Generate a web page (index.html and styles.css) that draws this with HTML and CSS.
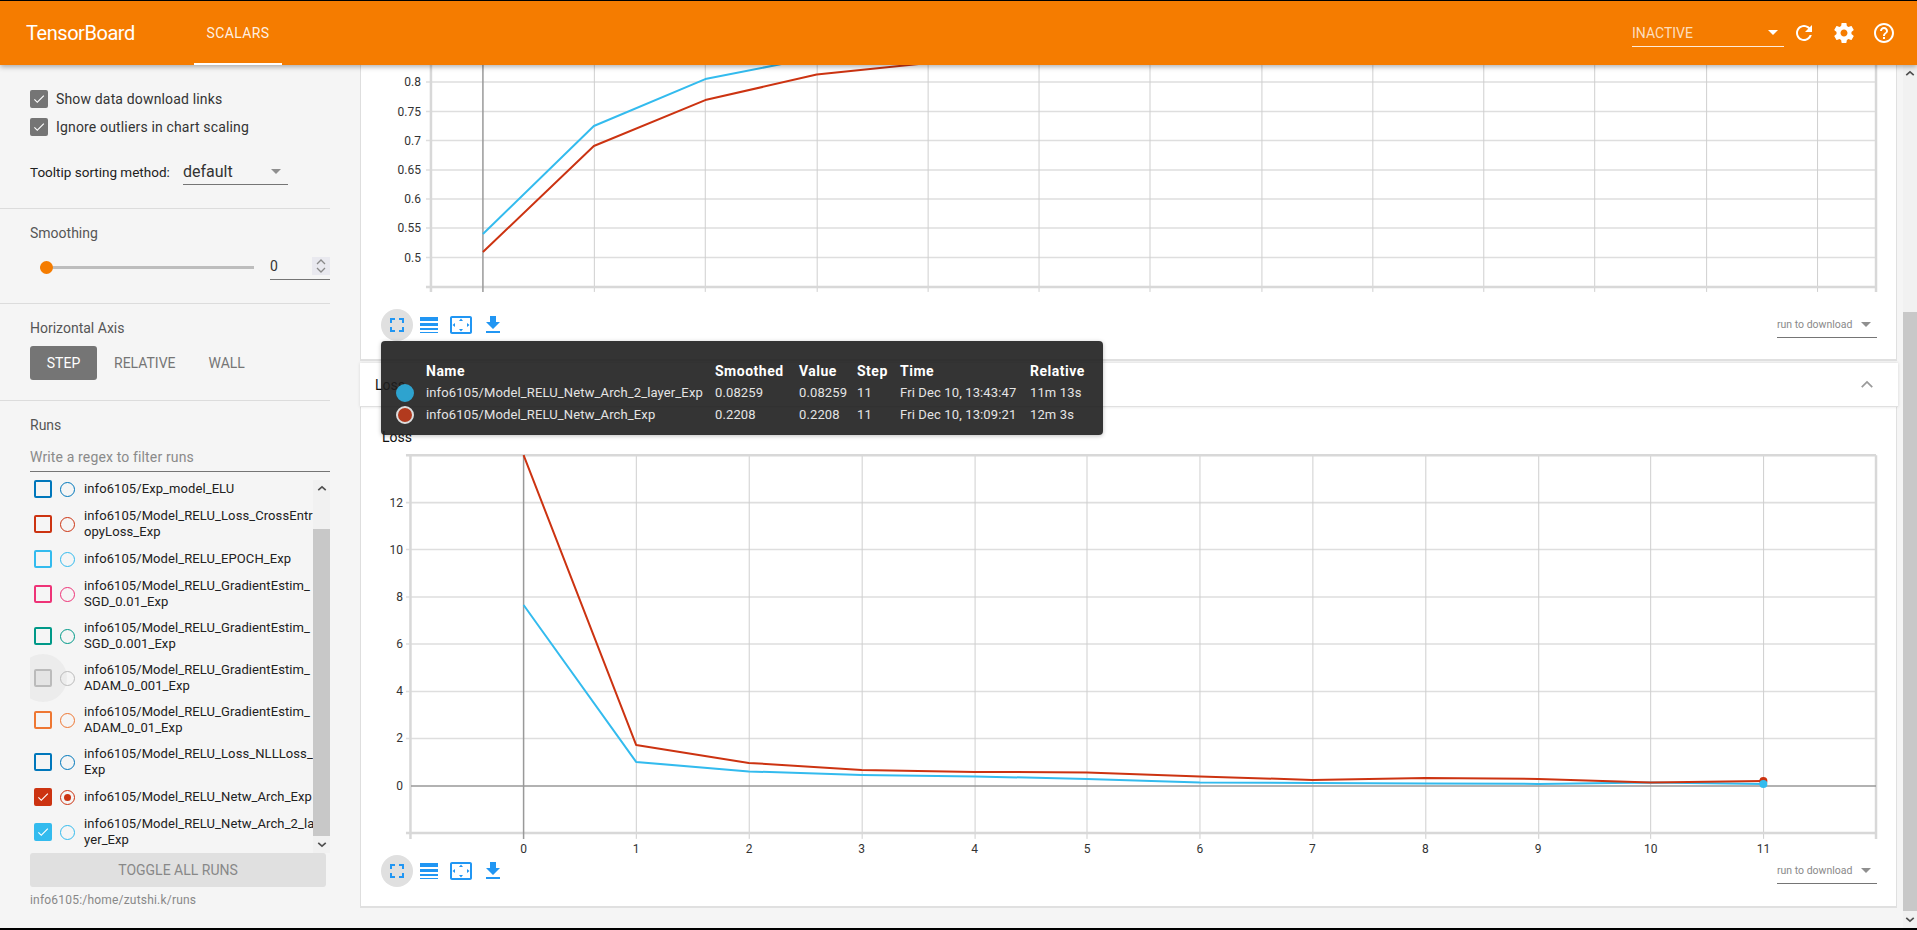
FILE: index.html
```html
<!DOCTYPE html>
<html lang="en">
<head>
<meta charset="utf-8">
<title>TensorBoard</title>
<link rel="stylesheet" href="styles.css">
</head>
<body>
<svg class="defs" width="0" height="0" aria-hidden="true">
  <defs>
    <symbol id="i-check" viewBox="0 0 24 24"><path d="M9 16.17 4.83 12l-1.42 1.41L9 19 21 7l-1.41-1.41z"/></symbol>
    <symbol id="i-full" viewBox="0 0 24 24"><path d="M7 14H5v5h5v-2H7v-3zm-2-4h2V7h3V5H5v5zm12 7h-3v2h5v-5h-2v3zM14 5v2h3v3h2V5h-5z"/></symbol>
    <symbol id="i-lines" viewBox="0 0 24 24"><path d="M3 17h18v-2H3v2zm0 3h18v-1H3v1zm0-7h18v-3H3v3zm0-9v4h18V4H3z"/></symbol>
    <symbol id="i-fit" viewBox="0 0 24 24"><path d="M12.01 5.5L10 8h4l-1.99-2.5zM18 10v4l2.5-1.99L18 10zM6 10l-2.5 2.01L6 14v-4zm8 6h-4l2.01 2.5L14 16zm7-13H3c-1.1 0-2 .9-2 2v14c0 1.1.9 2 2 2h18c1.1 0 2-.9 2-2V5c0-1.1-.9-2-2-2zm0 16.01H3V4.99h18v14.02z"/></symbol>
    <symbol id="i-down" viewBox="0 0 24 24"><path d="M19 9h-4V3H9v6H5l7 7 7-7zM5 18v2h14v-2H5z"/></symbol>
  </defs>
</svg>
<div class="app">
  <header class="topbar">
    <div class="brand">TensorBoard</div>
    <div class="tab">SCALARS</div>
    <div class="topright">
      <div class="inactive"><span>INACTIVE</span><i class="caret caret-white"></i></div>
      <button class="topicon"><svg viewBox="0 0 24 24"><path d="M17.65 6.35C16.2 4.9 14.21 4 12 4c-4.42 0-7.99 3.58-7.99 8s3.57 8 7.99 8c3.73 0 6.84-2.55 7.73-6h-2.08c-.82 2.33-3.04 4-5.65 4-3.31 0-6-2.69-6-6s2.69-6 6-6c1.66 0 3.14.69 4.22 1.78L13 11h7V4l-2.35 2.35z"/></svg></button>
      <button class="topicon"><svg viewBox="0 0 24 24"><path d="M19.43 12.98c.04-.32.07-.64.07-.98s-.03-.66-.07-.98l2.11-1.65c.19-.15.24-.42.12-.64l-2-3.46c-.12-.22-.39-.3-.61-.22l-2.49 1c-.52-.4-1.08-.73-1.69-.98l-.38-2.65C14.46 2.18 14.25 2 14 2h-4c-.25 0-.46.18-.49.42l-.38 2.65c-.61.25-1.17.59-1.69.98l-2.49-1c-.23-.09-.49 0-.61.22l-2 3.46c-.13.22-.07.49.12.64l2.11 1.65c-.04.32-.07.65-.07.98s.03.66.07.98l-2.11 1.65c-.19.15-.24.42-.12.64l2 3.46c.12.22.39.3.61.22l2.49-1c.52.4 1.08.73 1.69.98l.38 2.65c.03.24.24.42.49.42h4c.25 0 .46-.18.49-.42l.38-2.65c.61-.25 1.17-.59 1.69-.98l2.49 1c.23.09.49 0 .61-.22l2-3.46c.12-.22.07-.49-.12-.64l-2.11-1.65zM12 15.5c-1.93 0-3.5-1.57-3.5-3.5s1.57-3.5 3.5-3.5 3.5 1.57 3.5 3.5-1.57 3.5-3.5 3.5z"/></svg></button>
      <button class="topicon"><svg viewBox="0 0 24 24"><path d="M11 18h2v-2h-2v2zm1-16C6.48 2 2 6.48 2 12s4.48 10 10 10 10-4.48 10-10S17.52 2 12 2zm0 18c-4.41 0-8-3.59-8-8s3.59-8 8-8 8 3.59 8 8-3.59 8-8 8zm0-14c-2.21 0-4 1.79-4 4h2c0-1.1.9-2 2-2s2 .9 2 2c0 2-3 1.75-3 5h2c0-2.25 3-2.5 3-5 0-2.21-1.79-4-4-4z"/></svg></button>
    </div>
  </header>

  <div class="body-row">
    <aside class="sidebar">
      <section class="sec sec-options">
        <label class="opt"><span class="cb cb-grey"><svg><use href="#i-check"/></svg></span>Show data download links</label>
        <label class="opt"><span class="cb cb-grey"><svg><use href="#i-check"/></svg></span>Ignore outliers in chart scaling</label>
        <div class="sort-row">
          <span class="sort-label">Tooltip sorting method:</span>
          <div class="sort-select"><span>default</span><i class="caret caret-grey"></i></div>
        </div>
      </section>
      <section class="sec sec-smooth">
        <div class="sec-title">Smoothing</div>
        <div class="slider-row">
          <div class="slider"><i class="knob"></i></div>
          <div class="num"><span>0</span>
            <div class="spin"><svg viewBox="0 0 10 18"><path d="M1 7l4-4 4 4M1 11l4 4 4-4"/></svg></div>
          </div>
        </div>
      </section>
      <section class="sec sec-axis">
        <div class="sec-title">Horizontal Axis</div>
        <div class="axis-btns">
          <div class="ab ab-on">STEP</div>
          <div class="ab ab-rel">RELATIVE</div>
          <div class="ab ab-wall">WALL</div>
        </div>
      </section>
      <section class="sec sec-runs">
        <div class="sec-title">Runs</div>
        <div class="regex">Write a regex to filter runs</div>
        <div class="runs">
          <div class="run c-blue"><span class="cb"></span><span class="rd"></span><span class="rn">info6105/Exp_model_ELU</span></div>
          <div class="run c-red"><span class="cb"></span><span class="rd"></span><span class="rn">info6105/Model_RELU_Loss_CrossEntropyLoss_Exp</span></div>
          <div class="run c-cyan"><span class="cb"></span><span class="rd"></span><span class="rn">info6105/Model_RELU_EPOCH_Exp</span></div>
          <div class="run c-pink"><span class="cb"></span><span class="rd"></span><span class="rn">info6105/Model_RELU_GradientEstim_SGD_0.01_Exp</span></div>
          <div class="run c-teal"><span class="cb"></span><span class="rd"></span><span class="rn">info6105/Model_RELU_GradientEstim_SGD_0.001_Exp</span></div>
          <div class="run c-grey"><i class="ripple"></i><span class="cb"></span><span class="rd"></span><span class="rn">info6105/Model_RELU_GradientEstim_ADAM_0_001_Exp</span></div>
          <div class="run c-orange"><span class="cb"></span><span class="rd"></span><span class="rn">info6105/Model_RELU_GradientEstim_ADAM_0_01_Exp</span></div>
          <div class="run c-blue"><span class="cb"></span><span class="rd"></span><span class="rn">info6105/Model_RELU_Loss_NLLLoss_Exp</span></div>
          <div class="run c-red on"><span class="cb"><svg><use href="#i-check"/></svg></span><span class="rd sel"></span><span class="rn">info6105/Model_RELU_Netw_Arch_Exp</span></div>
          <div class="run c-cyan on"><span class="cb"><svg><use href="#i-check"/></svg></span><span class="rd"></span><span class="rn">info6105/Model_RELU_Netw_Arch_2_layer_Exp</span></div>
          <div class="mini-scroll">
            <div class="sb-arrow"><svg viewBox="0 0 12 8"><path d="M1.5 6L6 2l4.500 4"/></svg></div>
            <div class="sb-track"></div>
            <div class="sb-thumb"></div>
            <div class="sb-arrow"><svg viewBox="0 0 12 8"><path d="M1.500 2L6 6l4.500-4"/></svg></div>
          </div>
        </div>
        <div class="toggle">TOGGLE ALL RUNS</div>
        <div class="logdir">info6105:/home/zutshi.k/runs</div>
      </section>
    </aside>

    <main class="main">
      <article class="card card-top">
        <svg class="chart chart-a" viewBox="361 65 1536 244">
          <path class="gh" d="M426 82H1877M426 111.500H1877M426 140.500H1877M426 170H1877M426 199H1877M426 228H1877M426 257.500H1877"/>
          <path class="gv" d="M594.500 65V292M705.500 65V292M817.500 65V292M928.500 65V292M1039.500 65V292M1150.500 65V292M1262.500 65V292M1373.500 65V292M1484.500 65V292M1595.500 65V292M1707.500 65V292M1818.500 65V292"/>
          <path class="axis" d="M431 65V292M426 287H1877M1877 65V292"/>
          <path class="origin" d="M483 65V292"/>
          <polyline class="ln ln-cyan" points="483,234 594,126 705.500,79 817,57 928,40"/>
          <polyline class="ln ln-red" points="483,252 594,146 705.500,100 817,74.500 928,63 1039,50"/>
          <g class="ylab">
            <text x="421" y="86">0.8</text><text x="421" y="115.500">0.75</text><text x="421" y="145">0.7</text>
            <text x="421" y="174">0.65</text><text x="421" y="203">0.6</text><text x="421" y="232">0.55</text><text x="421" y="262">0.5</text>
          </g>
        </svg>
        <div class="tools">
          <button class="tool tool-on"><svg><use href="#i-full"/></svg></button>
          <button class="tool"><svg><use href="#i-lines"/></svg></button>
          <button class="tool"><svg><use href="#i-fit"/></svg></button>
          <button class="tool"><svg><use href="#i-down"/></svg></button>
          <div class="dl"><span>run to download</span><i class="caret caret-grey"></i></div>
        </div>
      </article>

      <div class="loss-head">
        <span>Loss</span>
        <svg viewBox="0 0 16 10"><path d="M2 8l6-6 6 6"/></svg>
      </div>

      <article class="card card-loss">
        <div class="chart-title">Loss</div>
        <svg class="chart chart-b" viewBox="361 445 1536 410">
          <path class="gh" d="M406 502.500H1877M406 549.500H1877M406 597H1877M406 644H1877M406 691.500H1877M406 738.500H1877"/>
          <path class="gv" d="M636.500 455V839M749.500 455V839M862.500 455V839M975.500 455V839M1087.500 455V839M1200.500 455V839M1313.500 455V839M1426.500 455V839M1539.500 455V839M1651.500 455V839M1764.500 455V839"/>
          <path class="axis" d="M410.500 455V839M406 455H1877M406 833H1877M1877 455V839"/>
          <path class="origin" d="M523.700 455V839M411 786H1877"/>
          <polyline class="ln ln-cyan" points="523.700,605 636.300,762 749,771.500 862,775 975,776.500 1087.500,779 1200.500,782.500 1313,783 1426,783.500 1539,784 1651.500,782.500 1764.300,784"/>
          <polyline class="ln ln-red" points="523.700,455 636.300,745 749,763 862,770 975,772 1087.500,772.500 1200.500,776.500 1313,780 1426,778 1539,779 1651.500,782.500 1764.300,781"/>
          <circle class="pt-red" cx="1764.300" cy="781" r="4"/>
          <circle class="pt-cyan" cx="1764.300" cy="784" r="4"/>
          <g class="ylab">
            <text x="403" y="506.500">12</text><text x="403" y="553.500">10</text><text x="403" y="601">8</text><text x="403" y="648">6</text>
            <text x="403" y="695.500">4</text><text x="403" y="742.500">2</text><text x="403" y="790">0</text>
          </g>
          <g class="xlab">
            <text x="523.700" y="853">0</text><text x="636.300" y="853">1</text><text x="749.500" y="853">2</text><text x="862" y="853">3</text>
            <text x="975" y="853">4</text><text x="1087.500" y="853">5</text><text x="1200.500" y="853">6</text><text x="1313" y="853">7</text>
            <text x="1426" y="853">8</text><text x="1539" y="853">9</text><text x="1651.500" y="853">10</text><text x="1764.300" y="853">11</text>
          </g>
        </svg>
        <div class="tools">
          <button class="tool tool-on"><svg><use href="#i-full"/></svg></button>
          <button class="tool"><svg><use href="#i-lines"/></svg></button>
          <button class="tool"><svg><use href="#i-fit"/></svg></button>
          <button class="tool"><svg><use href="#i-down"/></svg></button>
          <div class="dl"><span>run to download</span><i class="caret caret-grey"></i></div>
        </div>
      </article>
    </main>

    <div class="page-scroll">
      <div class="sb-arrow"><svg viewBox="0 0 12 8"><path d="M1.500 6L6 2l4.500 4"/></svg></div>
      <div class="ps-track"></div>
      <div class="ps-thumb"></div>
      <div class="sb-arrow"><svg viewBox="0 0 12 8"><path d="M1.500 2L6 6l4.500-4"/></svg></div>
    </div>
  </div>

  <div class="tooltip">
    <span></span><b>Name</b><b>Smoothed</b><b>Value</b><b>Step</b><b>Time</b><b>Relative</b>
    <i class="dot dot-cyan"></i><span>info6105/Model_RELU_Netw_Arch_2_layer_Exp</span><span>0.08259</span><span>0.08259</span><span>11</span><span>Fri Dec 10, 13:43:47</span><span>11m 13s</span>
    <i class="dot dot-red"></i><span>info6105/Model_RELU_Netw_Arch_Exp</span><span>0.2208</span><span>0.2208</span><span>11</span><span>Fri Dec 10, 13:09:21</span><span>12m 3s</span>
  </div>
</div>
</body>
</html>
```

FILE: styles.css
```css
* { box-sizing: border-box; }
html, body { margin: 0; height: 100%; overflow: hidden; }
body { background: #000; font-family: Roboto, "Liberation Sans", sans-serif; color: #333; }
.defs { position: absolute; }
button { border: 0; background: none; padding: 0; margin: 0; }

.app { position: relative; margin-top: 1px; height: 927px; background: #f5f5f5; display: flex; flex-direction: column; overflow: hidden; }

/* top bar */
.topbar { flex: none; position: relative; z-index: 3; height: 64px; background: #f57c00; color: #fff; display: flex; align-items: center; padding-left: 26px; box-shadow: 0 2px 5px rgba(0,0,0,.3); }
.brand { font-size: 20px; font-weight: 400; width: 107px; white-space: nowrap; letter-spacing: -.45px; }
.tab { margin-left: 61px; width: 88px; height: 64px; line-height: 64px; text-align: center; font-size: 14px; letter-spacing: .4px; border-bottom: 2px solid #fff; color: rgba(255,255,255,.9); }
.topright { margin-left: auto; display: flex; align-items: center; padding-right: 13px; }
.inactive { width: 152px; height: 27px; border-bottom: 1px solid rgba(255,255,255,.85); display: flex; align-items: center; justify-content: space-between; padding-right: 6px; font-size: 14px; color: rgba(255,255,255,.75); }
.topicon { width: 40px; height: 40px; display: flex; align-items: center; justify-content: center; }
.topicon svg { width: 24px; height: 24px; fill: #fff; }
.caret { display: block; width: 0; height: 0; border-left: 5px solid transparent; border-right: 5px solid transparent; }
.caret-white { border-top: 5px solid #fff; }
.caret-grey { border-top: 5px solid #8f8f8f; }

.body-row { flex: 1; min-height: 0; display: flex; }

/* sidebar */
.sidebar { flex: none; width: 330px; margin-right: 30px; font-size: 14px; }
.sec { padding-left: 30px; border-bottom: 1px solid #dcdcdc; }
.sec-runs { border-bottom: 0; }
.sec-options { height: 144px; padding-top: 25px; }
.opt { display: flex; align-items: center; height: 18px; margin-bottom: 10px; gap: 8px; font-size: 14px; letter-spacing: .16px; color: #333; }
.cb { flex: none; width: 18px; height: 18px; border-radius: 2px; border: 2px solid currentColor; display: block; }
.cb svg { display: block; width: 14px; height: 14px; fill: #fff; }
.cb-grey { background: #757575; border-color: #757575; }
.sort-row { display: flex; align-items: flex-start; margin-top: 23px; }
.sort-label { width: 153px; line-height: 26px; font-size: 13.500px; color: #212121; }
.sort-select { width: 105px; height: 26px; border-bottom: 1px solid #757575; display: flex; align-items: center; justify-content: space-between; padding-right: 7px; font-size: 16px; color: #333; }
.sec-title { height: 16px; line-height: 16px; font-size: 14px; color: #555; }
.sec-smooth { height: 95px; padding-top: 16px; }
.slider-row { display: flex; margin-top: 14px; height: 25px; justify-content: space-between; }
.slider { position: relative; margin-left: 10px; width: 214px; height: 3px; margin-top: 11px; background: #bdbdbd; }
.knob { position: absolute; left: 0; top: -5px; width: 13px; height: 13px; border-radius: 50%; background: #f57c00; }
.num { position: relative; width: 60px; height: 25px; border-bottom: 1px solid #757575; font-size: 14px; line-height: 23px; color: #333; }
.spin { position: absolute; right: 0; top: 2px; width: 18px; height: 18px; background: #e9e9ef; display: flex; justify-content: center; }
.spin svg { width: 10px; height: 18px; fill: none; stroke: #8a8a8a; stroke-width: 1.300; }
.sec-axis { height: 97px; padding-top: 16px; }
.axis-btns { display: flex; margin-top: 10px; font-size: 14px; color: #757575; }
.ab { height: 34px; line-height: 34px; }
.ab-on { width: 67px; text-align: center; background: #757575; color: #fff; border-radius: 3px; }
.ab-rel { margin-left: 17px; }
.ab-wall { margin-left: 33px; }
.sec-runs { padding-top: 16px; }
.regex { margin-top: 12px; height: 27px; line-height: 25px; border-bottom: 1px solid #757575; font-size: 14px; letter-spacing: .14px; color: #8a8a8a; }
.runs { position: relative; margin-top: 8px; height: 373px; overflow: hidden; }
.run { position: relative; display: flex; align-items: center; padding: 5px 0 5px 4px; font-size: 13px; line-height: 16px; }
.run:first-child { padding-top: 0; }
.run .cb, .run .rd { position: relative; }
.rd { flex: none; width: 15px; height: 15px; margin-left: 8px; border-radius: 50%; border: 1.500px solid currentColor; display: flex; align-items: center; justify-content: center; }
.rd.sel::after { content: ""; width: 7px; height: 7px; border-radius: 50%; background: currentColor; }
.rn { flex: none; width: 232px; margin-left: 9px; color: #212121; letter-spacing: .09px; word-break: break-all; }
.on .cb { background: currentColor; }
.c-blue { color: #0077bb; } .c-red { color: #cc3311; } .c-cyan { color: #33bbee; } .c-pink { color: #ee3377; }
.c-teal { color: #009988; } .c-grey { color: #bbbbbb; } .c-orange { color: #ee7733; }
.ripple { position: absolute; left: -11px; top: -3px; width: 48px; height: 48px; border-radius: 50%; background: #ececec; }
.c-grey .cb { background: #e4e4e4; }
.mini-scroll { position: absolute; right: 0; top: 0; bottom: 0; width: 17px; display: flex; flex-direction: column; background: #f1f1f1; }
.sb-arrow { flex: none; height: 17px; display: flex; align-items: center; justify-content: center; }
.sb-arrow svg { width: 10px; height: 7px; fill: none; stroke: #505050; stroke-width: 2; }
.sb-track { height: 32px; background: #f1f1f1; }
.sb-thumb { flex: 1; background: #c8c8c8; }
.toggle { width: 296px; height: 34px; line-height: 34px; text-align: center; background: #e0e0e0; border-radius: 3px; font-size: 14px; color: #888; }
.logdir { margin-top: 5px; height: 16px; line-height: 16px; font-size: 12px; letter-spacing: .2px; color: #888; }

/* main column */
.main { flex: none; width: 1537px; }
.card { background: #fff; border-left: 1px solid #dedede; border-right: 1px solid #e0e0e0; border-bottom: 2px solid #e0e0e0; }
.card-top { height: 296px; }
.card-loss { height: 501px; }
.chart { display: block; width: 1535px; }
.chart-a { height: 244px; }
.chart-b { height: 410px; }
.chart text { font-family: Roboto, "Liberation Sans", sans-serif; font-size: 12px; fill: #333; }
.ylab text { text-anchor: end; }
.xlab text { text-anchor: middle; }
.gh { fill: none; stroke: #dedede; stroke-width: 1.600; }
.gv { fill: none; stroke: #cfcfcf; stroke-width: 1; }
.axis { fill: none; stroke: #d8d8d8; stroke-width: 2.500; }
.origin { fill: none; stroke: #999; stroke-width: 1.500; }
.ln { fill: none; stroke-width: 2; stroke-linejoin: round; }
.ln-cyan { stroke: #33bbee; }
.ln-red { stroke: #cc3311; }
.pt-red { fill: #cc3311; }
.pt-cyan { fill: #33bbee; }
.tools { display: flex; height: 32px; padding-left: 20px; padding-right: 19px; }
.tool { width: 32px; height: 32px; border-radius: 50%; display: flex; align-items: center; justify-content: center; }
.tool svg { width: 24px; height: 24px; fill: #2196f3; }
.tool-on { background: #e0e0e0; }
.dl { margin-left: auto; margin-top: 2px; width: 100px; height: 27px; border-bottom: 1px solid #757575; display: flex; align-items: center; justify-content: space-between; padding-right: 6px; font-size: 10.500px; color: #8a8a8a; }
.loss-head { height: 44px; margin: 2px -1px 0 0; background: #fff; border-bottom: 1px solid #e0e0e0; padding: 0 24px 0 15px; display: flex; align-items: center; justify-content: space-between; font-size: 14px; color: #111; box-shadow: 0 0 3px rgba(0,0,0,.12); position: relative; }
.loss-head svg { width: 14px; height: 9px; fill: none; stroke: #9a9a9a; stroke-width: 2; }
.chart-title { height: 38px; padding: 22px 0 0 21px; font-size: 14px; line-height: 16px; color: #111; }

/* page scrollbar */
.page-scroll { flex: none; margin-left: 6px; width: 14px; display: flex; flex-direction: column; background: #f1f1f1; }
.ps-track { height: 230px; }
.ps-thumb { flex: 1; background: #c8c8c8; }

/* tooltip over the charts */
.tooltip { position: absolute; z-index: 4; left: 381px; top: 340px; width: 722px; height: 94px; padding: 19px 0 0 0; border-radius: 4px; background: rgba(30,30,30,.9); box-shadow: 0 1px 4px rgba(0,0,0,.25); color: #e4e4e4; font-size: 13px; letter-spacing: .13px; line-height: 22px; display: grid; grid-template-columns: 45px 289px 84px 58px 43px 130px 1fr; grid-auto-rows: 22px; white-space: nowrap; }
.tooltip b { font-size: 14px; font-weight: 700; letter-spacing: .5px; color: #fff; }
.dot { display: block; align-self: center; justify-self: start; margin-left: 15px; width: 18px; height: 18px; border-radius: 50%; border: 2px solid #ddd; }
.dot-cyan { background: #2ea3cf; border-color: #2ea3cf; }
.dot-red { background: #b23a1e; }
```
